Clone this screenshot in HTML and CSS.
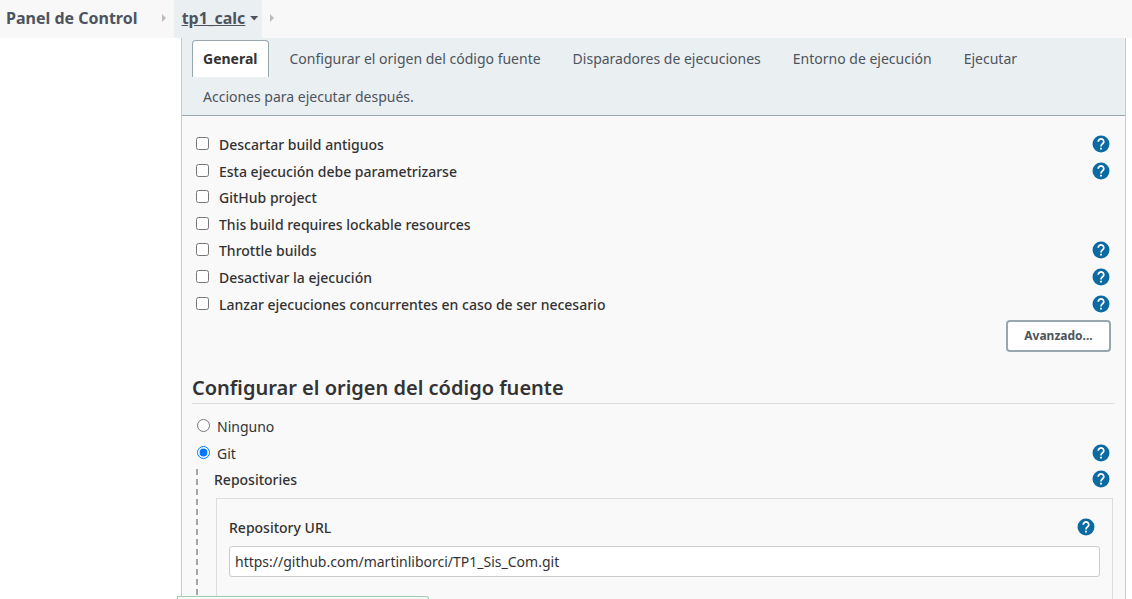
FILE: index.html
```html
<!DOCTYPE html>
<html lang="es">
<head>
<meta charset="utf-8">
<title>tp1_calc Config</title>
<link rel="stylesheet" href="styles.css">
</head>
<body>
<svg class="defs" width="0" height="0">
  <symbol id="help" viewBox="0 0 24 24"><circle cx="12" cy="12" r="11.300" fill="#0b6aa2"/><path d="M8.300 8.900a3.700 3.500 0 1 1 6.300 2.400C13.200 12.600 12 13.200 12 15.300" fill="none" stroke="#fff" stroke-width="2.300"/><path d="M10.800 16.900h2.400v2.300h-2.400z" fill="#fff"/></symbol>
</svg>
<nav class="breadcrumbs">
  <a class="crumb">Panel de Control</a>
  <span class="arrow arrow-first"></span>
  <a class="crumb crumb-active"><span class="crumb-name">tp1_calc</span><span class="caret"></span></a>
  <span class="arrow arrow-last"></span>
</nav>
<main class="panel">
  <div class="tabs">
    <a class="tab tab-active">General</a>
    <a class="tab">Configurar el origen del código fuente</a>
    <a class="tab">Disparadores de ejecuciones</a>
    <a class="tab">Entorno de ejecución</a>
    <a class="tab">Ejecutar</a>
    <a class="tab">Acciones para ejecutar después.</a>
  </div>
  <form class="config">
    <div class="options">
      <div class="option"><label><input type="checkbox">Descartar build antiguos</label><svg class="help"><use href="#help"/></svg></div>
      <div class="option"><label><input type="checkbox">Esta ejecución debe parametrizarse</label><svg class="help"><use href="#help"/></svg></div>
      <div class="option"><label><input type="checkbox">GitHub project</label></div>
      <div class="option"><label><input type="checkbox">This build requires lockable resources</label></div>
      <div class="option"><label><input type="checkbox">Throttle builds</label><svg class="help"><use href="#help"/></svg></div>
      <div class="option"><label><input type="checkbox">Desactivar la ejecución</label><svg class="help"><use href="#help"/></svg></div>
      <div class="option"><label><input type="checkbox">Lanzar ejecuciones concurrentes en caso de ser necesario</label><svg class="help"><use href="#help"/></svg></div>
    </div>
    <div class="actions"><button type="button" class="advanced">Avanzado...</button></div>
    <h2 class="section-title">Configurar el origen del código fuente</h2>
    <div class="option scm"><label><input type="radio" name="scm">Ninguno</label></div>
    <div class="option scm"><label><input type="radio" name="scm" checked>Git</label><svg class="help"><use href="#help"/></svg></div>
    <div class="nested">
      <svg class="guide" width="2" height="140"><line x1="1" y1="0" x2="1" y2="140" stroke="#a6a6a6" stroke-width="2" stroke-dasharray="6 4"/></svg>
      <div class="nested-body">
        <div class="nested-head"><span>Repositories</span><svg class="help"><use href="#help"/></svg></div>
        <div class="repository">
          <div class="field-head"><span>Repository URL</span><svg class="help"><use href="#help"/></svg></div>
          <input class="url" type="text" value="https://github.com/martinliborci/TP1_Sis_Com.git">
        </div>
      </div>
    </div>
  </form>
</main>
<div class="save-bar"></div>
</body>
</html>
```
FILE: styles.css
```css
* { box-sizing: border-box; }
html, body { height: 599px; overflow: hidden; }
body {
  margin: 0;
  background: #fff;
  color: #333;
  font: 14px/20px "Noto Sans", sans-serif;
}
.defs { position: absolute; }

.breadcrumbs {
  display: flex;
  align-items: center;
  height: 38px;
  padding-left: 6px;
  background: #f8f8f8;
  color: #4d545d;
  font-size: 16px;
  font-weight: 700;
}
.crumb { line-height: 38px; padding-bottom: 2px; }
.crumb-active {
  display: flex;
  align-items: center;
  width: 88px;
  height: 38px;
  padding: 0 0 2px 7.6px;
  background: #eaeff2;
}
.crumb-name { text-decoration: underline; }
.caret {
  width: 9px;
  height: 5px;
  margin: 0 0 0 4.4px;
  background: #4d545d;
  clip-path: polygon(0 0, 100% 0, 50% 100%);
}
.arrow {
  margin-bottom: 2px;
  border: 4px solid transparent;
  border-left-color: #bcbcbc;
  border-right: 0;
}
.arrow-first { margin-left: 24.6px; margin-right: 8px; }
.arrow-last { margin-left: 8px; }

.panel {
  width: 945px;
  height: 561px;
  margin-left: 181px;
  overflow: hidden;
  border: solid #c5cace;
  border-width: 0 1px;
  background: #f9f9f9;
}
.tabs {
  display: flex;
  flex-wrap: wrap;
  align-content: flex-start;
  column-gap: 10px;
  height: 78px;
  padding: 2px 10px 0;
  border-bottom: 1px solid #98a6ae;
  background: #eaeff2;
  color: #4d545d;
}
.tab {
  height: 38px;
  padding: 9px 11px 0;
}
.tab-active {
  height: 37px;
  padding: 8px 10px 0;
  border: 1px solid #98a6ae;
  border-bottom: 0;
  border-radius: 4px 4px 0 0;
  background: #fff;
  color: #333;
  font-weight: 700;
}

.config { padding: 15.65px 10px 0; }
.option {
  display: flex;
  align-items: center;
  justify-content: space-between;
  height: 26.6px;
  padding-right: 5px;
  font-weight: 500;
}
.option label { display: flex; align-items: center; }
.option input { margin: 0 10px 3px 4px; }
.help { width: 18px; height: 18px; flex: none; display: block; margin-bottom: 2px; }

.actions { display: flex; justify-content: flex-end; margin-top: 2.15px; padding-right: 4px; }
.advanced {
  width: 105px;
  height: 32px;
  padding: 1px 0 0;
  border: 2px solid #98a6ae;
  border-radius: 4px;
  background: #fff;
  color: #4d545d;
  font: 700 12px/20px "Noto Sans", sans-serif;
}
.section-title {
  height: 33px;
  margin: 19px 0 10px;
  padding-top: 5px;
  border-bottom: 1px solid #ddd;
  font-size: 20px;
  line-height: 24px;
  font-weight: 600;
}
.scm { font-weight: 400; }
.scm input { margin: 0 7px 2.8px 5px; }

.nested { display: flex; padding-left: 4px; }
.guide { display: block; margin-top: 1.8px; flex: none; }
.nested-body { flex: 1; padding-left: 16px; }
.nested-head, .field-head {
  display: flex;
  align-items: center;
  justify-content: space-between;
  font-weight: 500;
}
.nested-head { height: 25px; padding-right: 5px; }
.repository {
  height: 130px;
  margin: 6px 2px 0 2px;
  padding: 19px 12px 0;
  border: 1px solid #ddd;
}
.field-head { height: 20px; padding-right: 5px; }
.field-head .help { margin-bottom: 3px; }
.url {
  display: block;
  width: 871px;
  height: 31px;
  margin-top: 8px;
  padding: 0 5px;
  border: 1px solid #ccc;
  border-radius: 3px;
  background: #fff;
  color: #333;
  font: 14px/20px "Noto Sans", sans-serif;
}
.save-bar {
  position: absolute;
  left: 177px;
  top: 596px;
  width: 252px;
  height: 3px;
  border: 1px solid #a3cfb5;
  border-bottom: 0;
  border-radius: 0 5px 0 0;
  background: #f8fbf8;
}
```
